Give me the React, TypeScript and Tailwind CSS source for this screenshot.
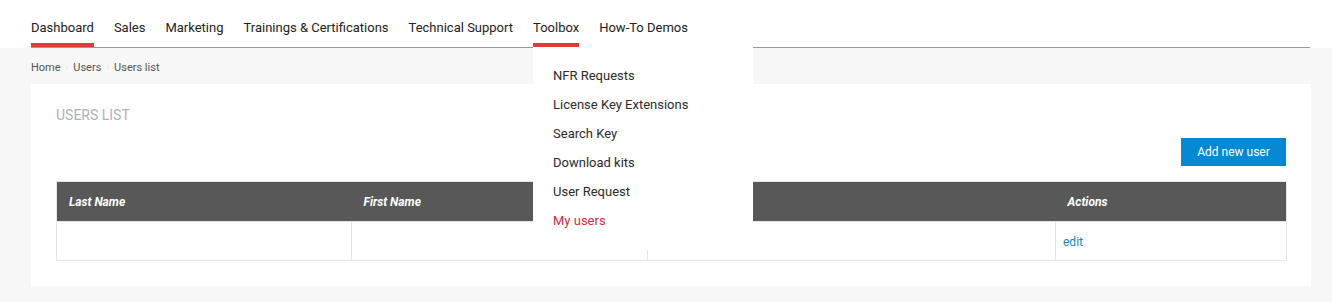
const navItems = [
  "Dashboard",
  "Sales",
  "Marketing",
  "Trainings & Certifications",
  "Technical Support",
  "Toolbox",
  "How-To Demos",
];

const toolboxItems = [
  "NFR Requests",
  "License Key Extensions",
  "Search Key",
  "Download kits",
  "User Request",
  "My users",
];

const columns = [
  { label: "Last Name", w: "w-[295px]" },
  { label: "First Name", w: "w-[296px]" },
  { label: "Email", w: "w-[408px]" },
  { label: "Actions", w: "w-[231px]" },
];

export default function App() {
  return (
    <div className="min-h-[302px] bg-[#f7f7f7] font-['Roboto',sans-serif] text-[#222]">
      {/* Top nav */}
      <div className="bg-white pl-[31px] pr-[22px]">
        <nav className="flex gap-5 border-b border-[#9a9a9a]">
          {navItems.map((item) => {
            const active = item === "Dashboard" || item === "Toolbox";
            return (
              <div key={item} className="relative">
                <div
                  className={
                    "pt-[18px] pb-[5px] text-[13px] leading-5 border-b-4 " +
                    (active ? "border-[#e0393e]" : "border-transparent")
                  }
                >
                  {item}
                </div>
                {item === "Toolbox" && (
                  <div className="absolute left-0 top-[47px] z-20 w-[220px] bg-white pt-[14px] pb-[15px]">
                    {toolboxItems.map((t) => (
                      <div
                        key={t}
                        className={
                          "px-5 text-[13px] leading-[29px] whitespace-nowrap " +
                          (t === "My users" ? "text-[#d8283f]" : "text-[#2a2a2a]")
                        }
                      >
                        {t}
                      </div>
                    ))}
                  </div>
                )}
              </div>
            );
          })}
        </nav>
      </div>

      <div className="pl-[31px] pr-[21px] pb-4">
        {/* Breadcrumb */}
        <div className="flex h-[36px] items-center gap-[5px] pt-[4px] text-[11px] text-[#555]">
          <span>Home</span>
          <span className="text-[9px] text-[#e3e3e3]">›</span>
          <span>Users</span>
          <span className="text-[9px] text-[#e3e3e3]">›</span>
          <span>Users list</span>
        </div>

        {/* Card */}
        <div className="bg-white px-[25px] pt-[21px] pb-[25px]">
          <h2 className="text-[14px] leading-5 uppercase text-[#abb2bb]">Users list</h2>
          <div className="mt-[13px] mb-[15px] flex justify-end">
            <button className="h-[28px] w-[105px] bg-[#0589d3] text-[12px] text-white">
              Add new user
            </button>
          </div>
          <table className="w-full table-fixed border-collapse border border-[#e6e6e6]">
            <thead>
              <tr className="h-[40px] bg-[#585858]">
                {columns.map((c) => (
                  <th
                    key={c.label}
                    className={c.w + " px-3 text-left text-[12px] font-bold italic text-white"}
                  >
                    {c.label}
                  </th>
                ))}
              </tr>
            </thead>
            <tbody>
              <tr className="h-[39px]">
                <td className="border border-[#e6e6e6]"></td>
                <td className="border border-[#e6e6e6]"></td>
                <td className="border border-[#e6e6e6]"></td>
                <td className="border border-[#e6e6e6] pl-[7px] pt-[1px] text-[12px] text-[#1784c7]">edit</td>
              </tr>
            </tbody>
          </table>
        </div>
      </div>
    </div>
  );
}
